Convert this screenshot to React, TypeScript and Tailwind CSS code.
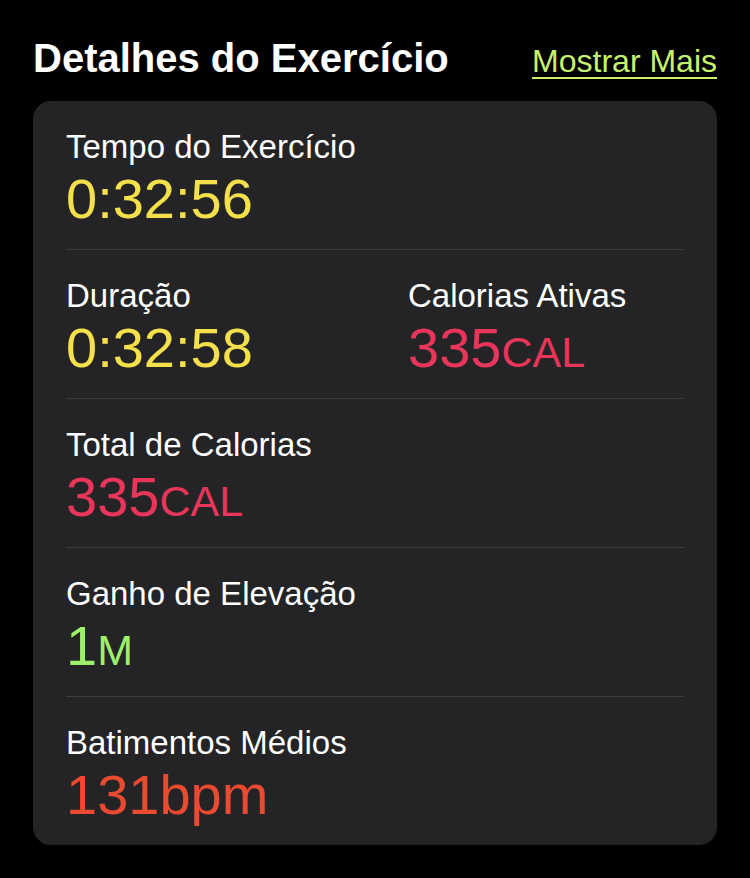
import React from 'react'

type Stat = {
  label: string
  value: string
  unit?: string
  color: string
}

const rows: Stat[][] = [
  [{ label: 'Tempo do Exercício', value: '0:32:56', color: 'text-[#f4e04a]' }],
  [
    { label: 'Duração', value: '0:32:58', color: 'text-[#f4e04a]' },
    { label: 'Calorias Ativas', value: '335', unit: 'CAL', color: 'text-[#e9355a]' },
  ],
  [{ label: 'Total de Calorias', value: '335', unit: 'CAL', color: 'text-[#e9355a]' }],
  [{ label: 'Ganho de Elevação', value: '1', unit: 'M', color: 'text-[#9ef06a]' }],
  [{ label: 'Batimentos Médios', value: '131bpm', color: 'text-[#e94a30]' }],
]

function StatCell({ stat }: { stat: Stat }) {
  return (
    <div>
      <p className="text-[33px] leading-[38px] text-white">{stat.label}</p>
      <p className={`mt-[3px] h-[60px] text-[56px] leading-[60px] ${stat.color}`}>
        {stat.value}
        {stat.unit && <span className="text-[43px] leading-none">{stat.unit}</span>}
      </p>
    </div>
  )
}

export default function App() {
  return (
    <div
      className="min-h-[878px] w-[750px] bg-black pt-[34px]"
      style={{ fontFamily: '"Liberation Sans", Arial, sans-serif' }}
    >
      {/* Header */}
      <div className="flex items-baseline justify-between px-[33px]">
        <h1 className="text-[40px] font-bold leading-[48px] text-white">Detalhes do Exercício</h1>
        <a className="text-[32px] leading-[48px] text-[#c6f36c] underline decoration-2 underline-offset-[5px]">
          Mostrar Mais
        </a>
      </div>

      {/* Card */}
      <div className="mx-[33px] mt-[16px] rounded-[18px] bg-[#242426] px-[33px]">
        {rows.map((row, i) => (
          <div
            key={i}
            className={`grid grid-cols-[342px_1fr] pt-[27px] pb-[20px] ${
              i < rows.length - 1 ? 'border-b border-[#3d3d40]' : ''
            }`}
          >
            {row.map((stat) => (
              <StatCell key={stat.label} stat={stat} />
            ))}
          </div>
        ))}
      </div>
    </div>
  )
}
